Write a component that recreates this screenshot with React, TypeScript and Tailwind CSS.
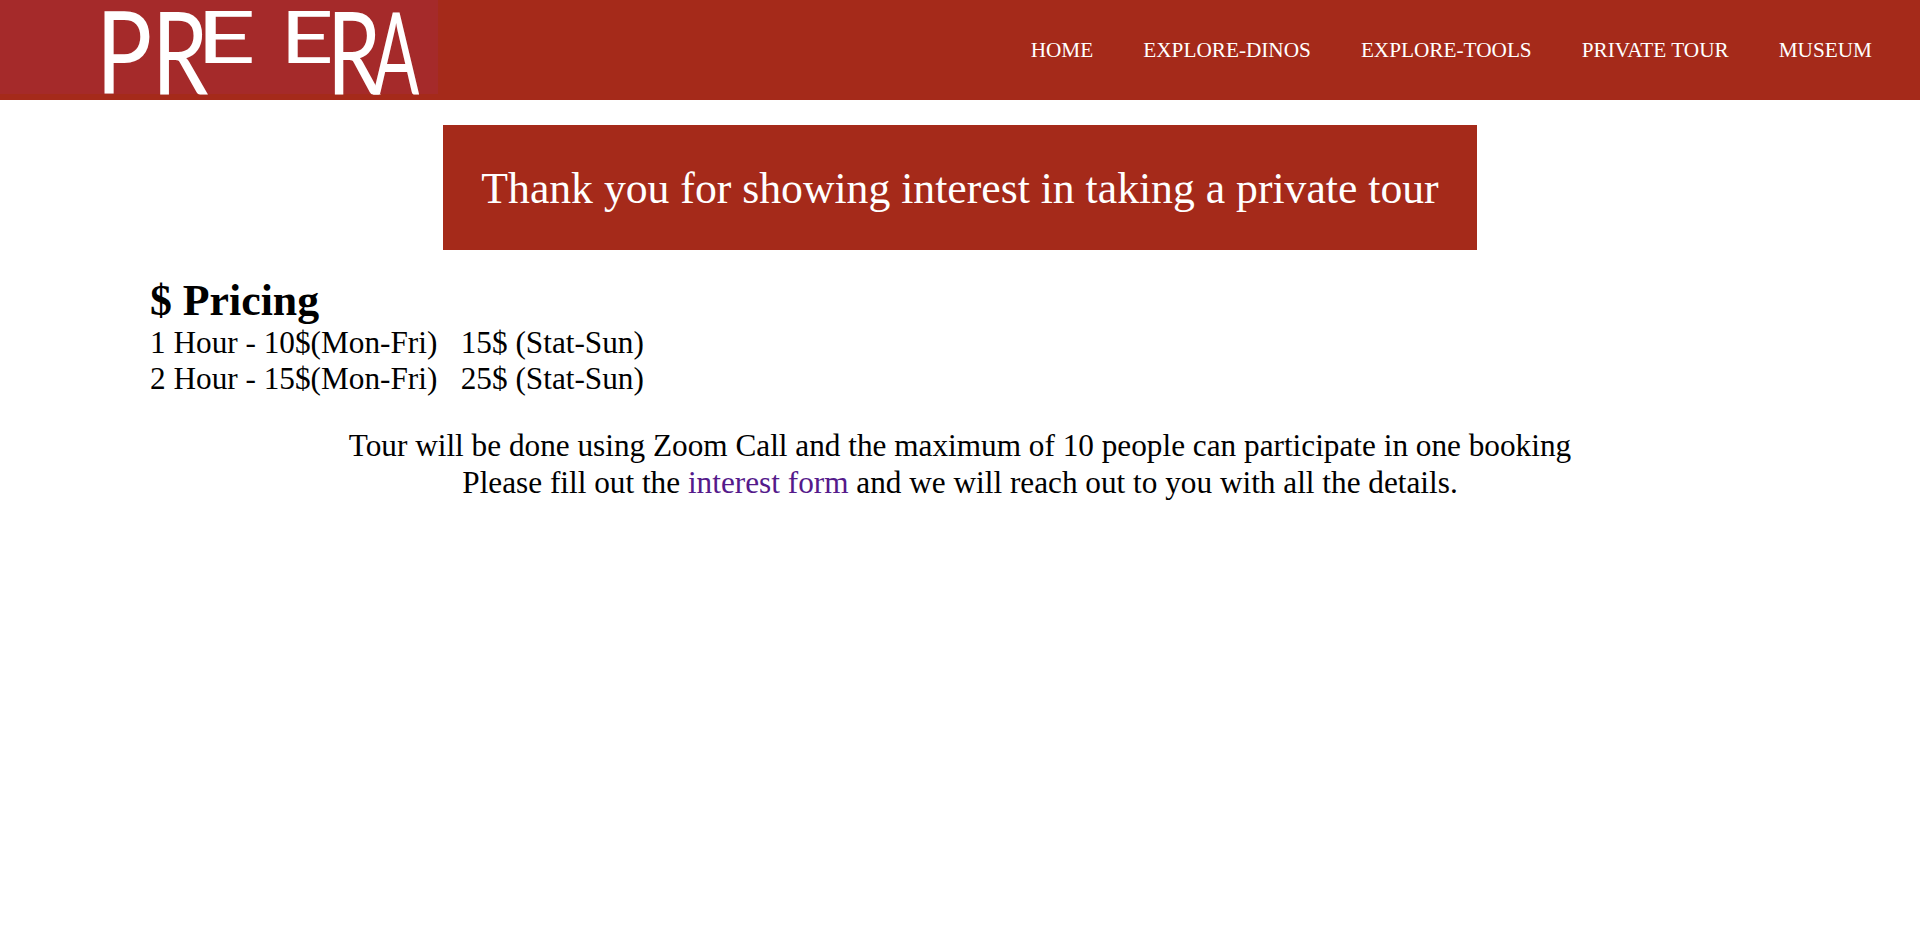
const navItems = ['HOME', 'EXPLORE-DINOS', 'EXPLORE-TOOLS', 'PRIVATE TOUR', 'MUSEUM'];

const logoLetters: { ch: string; cls: string }[] = [
  { ch: 'P', cls: 'w-[56px] scale-x-[1.3] scale-y-[1.58]' },
  { ch: 'R', cls: 'w-[44px] scale-x-[1.25] scale-y-[1.58]' },
  { ch: 'E', cls: 'w-[84px] scale-x-[1.45]' },
  { ch: 'E', cls: 'w-[47px] scale-x-[1.3]' },
  { ch: 'R', cls: 'w-[46px] scale-x-[1.2] scale-y-[1.58]' },
  { ch: 'A', cls: 'w-[48px] scale-x-[0.95] scale-y-[1.58]' },
];

function Logo() {
  return (
    <div className="w-[438px] h-[94px] bg-[#a52a2a] pl-[96px] pt-[9px] flex items-start">
      {logoLetters.map((l, i) => (
        <span
          key={i}
          className={`text-white font-normal text-[72px] leading-[52px] origin-top-left font-['Lato',sans-serif] ${l.cls}`}
        >
          {l.ch}
        </span>
      ))}
    </div>
  );
}

export default function App() {
  return (
    <div className="min-h-[942px] bg-white text-black font-['Liberation_Serif',serif]">
      <header className="h-[100px] bg-[#a52a1a] flex items-start justify-between">
        <Logo />
        <nav className="flex gap-[50px] pr-[48px] pt-[38px] text-white text-[21.25px] leading-[24px]">
          {navItems.map((item) => (
            <a key={item}>{item}</a>
          ))}
        </nav>
      </header>
      <div className="flex justify-center mt-[25px]">
        <h1 className="bg-[#a52a1a] text-white text-[43.7px] leading-[52px] px-[38px] pt-[37px] pb-[36px]">
          Thank you for showing interest in taking a private tour
        </h1>
      </div>
      <section className="pl-[150px] mt-[27px] text-[31.25px] leading-[36px]">
        <h2 className="text-[43.8px] leading-[46px] font-bold mb-[2px]">$ Pricing</h2>
        <p className="whitespace-pre">1 Hour - 10$(Mon-Fri)   15$ (Stat-Sun)</p>
        <p className="whitespace-pre">2 Hour - 15$(Mon-Fri)   25$ (Stat-Sun)</p>
      </section>
      <section className="mt-[30px] text-center text-[31.25px] leading-[37px]">
        <p>Tour will be done using Zoom Call and the maximum of 10 people can participate in one booking</p>
        <p>
          Please fill out the <a className="text-[#551a8b]">interest form</a> and we will reach out to you with all the details.
        </p>
      </section>
    </div>
  );
}
